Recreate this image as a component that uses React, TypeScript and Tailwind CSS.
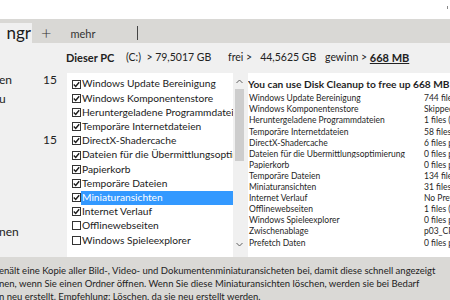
import React from "react";

const items: { label: string; checked: boolean; selected?: boolean }[] = [
  { label: "Windows Update Bereinigung", checked: true },
  { label: "Windows Komponentenstore", checked: true },
  { label: "Heruntergeladene Programmdateien", checked: true },
  { label: "Temporäre Internetdateien", checked: true },
  { label: "DirectX-Shadercache", checked: true },
  { label: "Dateien für die Übermittlungsoptimierung", checked: true },
  { label: "Papierkorb", checked: true },
  { label: "Temporäre Dateien", checked: true },
  { label: "Miniaturansichten", checked: true, selected: true },
  { label: "Internet Verlauf", checked: true },
  { label: "Offlinewebseiten", checked: false },
  { label: "Windows Spieleexplorer", checked: false },
];

const details: [string, string][] = [
  ["Windows Update Bereinigung", "744 files (312 MB)"],
  ["Windows Komponentenstore", "Skipped"],
  ["Heruntergeladene Programmdateien", "1 files (0 MB)"],
  ["Temporäre Internetdateien", "58 files (12 MB)"],
  ["DirectX-Shadercache", "6 files processed"],
  ["Dateien für die Übermittlungsoptimierung", "0 files processed"],
  ["Papierkorb", "0 files processed"],
  ["Temporäre Dateien", "134 files (120 MB)"],
  ["Miniaturansichten", "31 files (44 MB)"],
  ["Internet Verlauf", "No Preview"],
  ["Offlinewebseiten", "1 files (0 MB)"],
  ["Windows Spieleexplorer", "0 files processed"],
  ["Zwischenablage", "p03_CP_1"],
  ["Prefetch Daten", "0 files processed"],
];

function Box({ checked }: { checked: boolean }) {
  return (
    <span className="w-[9px] h-[9px] shrink-0 border border-[#333333] bg-white flex items-center justify-center">
      {checked && (
        <svg width="7" height="7" viewBox="0 0 7 7">
          <path d="M0.8 3.6 L2.7 5.4 L6.2 1.2" fill="none" stroke="#1a1a1a" strokeWidth="1.4" />
        </svg>
      )}
    </span>
  );
}

export default function App() {
  return (
    <div className="w-[450px] h-[300px] overflow-hidden bg-white flex flex-col font-[Lato,'Noto_Sans',sans-serif] text-[#1b1b1b]">
      {/* top white strip */}
      <div className="h-[19px] shrink-0 bg-white flex justify-end">
        <span className="mr-[2px] mt-[6px] w-px h-[3px] bg-[#888888]" />
      </div>
      {/* tab bar */}
      <div className="h-[24px] shrink-0 bg-[#d9d8d5] flex items-end">
        <div className="w-[32px] h-[20px] bg-[#f0f0f0] flex items-center justify-end pr-[1px] overflow-hidden">
          <span className="text-[17px] leading-none whitespace-nowrap -mt-[2px]">ngr</span>
        </div>
        <div className="h-[20px] flex items-center">
          <span className="ml-[9px] text-[18px] leading-none font-light text-[#333333] -mt-[3px]">+</span>
          <span className="ml-[19px] text-[11px] leading-none text-[#333333]">mehr</span>
          <span className="ml-[42px] w-px h-[14px] bg-[#444444]" />
        </div>
      </div>
      {/* path row */}
      <div className="h-[30px] shrink-0 bg-[#f0f0f0] flex items-center text-[10.5px] text-[#222222] whitespace-nowrap">
        <span className="ml-[66px] w-[60px] font-bold text-[11px]">Dieser PC</span>
        <span className="w-[102px]">(C:)&nbsp; &gt; 79,5017 GB</span>
        <span className="w-[97px]">frei &gt;&nbsp;&nbsp; 44,5625 GB</span>
        <span>gewinn &gt;&nbsp; </span>
        <span className="font-bold underline text-[11px]">668 MB</span>
      </div>
      {/* main */}
      <div className="h-[184px] shrink-0 flex bg-[#f0f0f0]">
        {/* left panel */}
        <div className="w-[67px] shrink-0 flex flex-col text-[12px] text-[#222222] overflow-hidden">
          <div className="h-[14px] flex items-center justify-between pr-[10px]">
            <span className="-ml-[1px]">en</span>
            <span>15</span>
          </div>
          <div className="h-[5px]" />
          <div className="h-[14px] flex items-center">
            <span className="-ml-[1px]">u</span>
          </div>
          <div className="h-[27px]" />
          <div className="h-[14px] flex items-center justify-end pr-[10px]">
            <span>15</span>
          </div>
          <div className="h-[78px]" />
          <div className="h-[14px] flex items-center">
            <span className="-ml-[1px]">nen</span>
          </div>
        </div>
        {/* checklist */}
        <div className="w-[179px] shrink-0 bg-white flex">
          <div className="w-[166px] shrink-0 flex flex-col pt-[4px] overflow-hidden">
            {items.map((it) => (
              <div key={it.label} className="h-[14.2px] shrink-0 flex items-center pl-[5px] text-[10.2px] whitespace-nowrap">
                <Box checked={it.checked} />
                <span
                  className={
                    it.selected
                      ? "pl-[1px] flex-1 h-[14px] flex items-center bg-[#3399ff] text-white"
                      : "pl-[1px] flex-1 h-[14px] flex items-center"
                  }
                >
                  {it.label}
                </span>
              </div>
            ))}
          </div>
          <div className="w-[13px] shrink-0 bg-[#f0f0f0] flex flex-col items-center">
            <div className="h-[16px] shrink-0 flex items-center justify-center">
              <svg width="7" height="5" viewBox="0 0 7 5">
                <path d="M0.5 4 L3.5 1 L6.5 4" fill="none" stroke="#606060" strokeWidth="1" />
              </svg>
            </div>
            <div className="w-[9px] h-[72px] shrink-0 bg-[#cdcdcd]" />
            <div className="flex-1" />
            <div className="h-[22px] shrink-0 flex items-start justify-center pt-[7px]">
              <svg width="7" height="5" viewBox="0 0 7 5">
                <path d="M0.5 1 L3.5 4 L6.5 1" fill="none" stroke="#606060" strokeWidth="1" />
              </svg>
            </div>
          </div>
        </div>
        <div className="w-[2px] shrink-0" />
        {/* right panel */}
        <div className="flex-1 bg-white overflow-hidden flex flex-col pt-[3px] text-[#1f1f1f]">
          <div className="h-[17px] shrink-0 flex items-center text-[10.2px] font-bold whitespace-nowrap">
            You can use Disk Cleanup to free up 668 MB of disk space on (C:)
          </div>
          {details.map(([a, b]) => (
            <div key={a} className="h-[11.1px] shrink-0 flex items-center text-[8.5px] whitespace-nowrap leading-none">
              <span className="w-[176px] shrink-0 pl-[1px] overflow-hidden">{a}</span>
              <span>{b}</span>
            </div>
          ))}
        </div>
      </div>
      {/* bottom description */}
      <div className="flex-1 bg-[#dad9d6] flex flex-col pt-[7px] text-[9.5px] text-[#222222] whitespace-nowrap overflow-hidden">
        <div className="h-[13px] leading-[13px] -ml-[1px]">enält eine Kopie aller Bild-, Video- und Dokumentenminiaturansicheten bei, damit diese schnell angezeigt</div>
        <div className="h-[13px] leading-[13px] -ml-[1px]">nen, wenn Sie einen Ordner öffnen. Wenn Sie diese Miniaturansichten löschen, werden sie bei Bedarf</div>
        <div className="h-[13px] leading-[13px] -ml-[1px]">n neu erstellt. Empfehlung: Löschen, da sie neu erstellt werden.</div>
      </div>
    </div>
  );
}
